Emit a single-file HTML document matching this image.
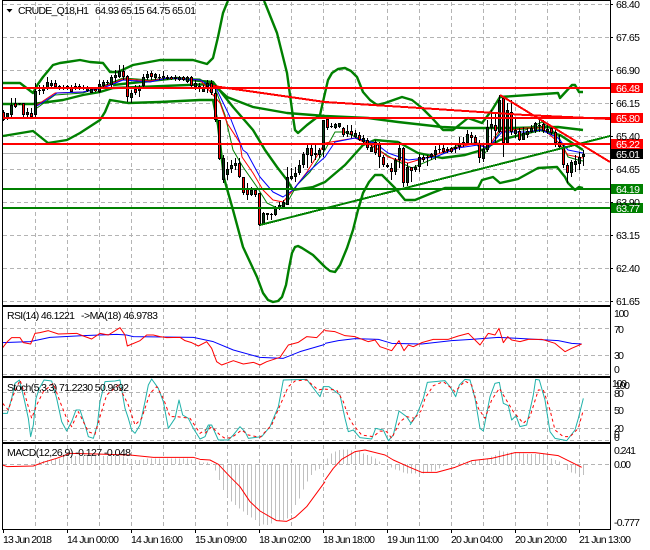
<!DOCTYPE html>
<html><head><meta charset="utf-8"><style>
html,body{margin:0;padding:0;background:#fff}
svg{display:block}
text{font-family:"Liberation Sans",sans-serif;font-size:10.5px;fill:#000}
polyline,path{fill:none;vector-effect:non-scaling-stroke;stroke-linejoin:round}
.g{stroke:#b4b4b4;stroke-width:1;stroke-dasharray:4 3;shape-rendering:crispEdges}
</style></head><body>
<svg width="650" height="550" viewBox="0 0 650 550" xmlns="http://www.w3.org/2000/svg">
<rect width="650" height="550" fill="#fff"/>
<!-- vertical grid -->
<path class="g" d="M35.5 2V304M67.5 2V304M99.5 2V304M131.5 2V304M163.5 2V304M195.5 2V304M227.5 2V304M259.5 2V304M291.5 2V304M323.5 2V304M355.5 2V304M387.5 2V304M419.5 2V304M451.5 2V304M483.5 2V304M515.5 2V304M547.5 2V304M579.5 2V304
M35.5 308V375M67.5 308V375M99.5 308V375M131.5 308V375M163.5 308V375M195.5 308V375M227.5 308V375M259.5 308V375M291.5 308V375M323.5 308V375M355.5 308V375M387.5 308V375M419.5 308V375M451.5 308V375M483.5 308V375M515.5 308V375M547.5 308V375M579.5 308V375
M35.5 379V441M67.5 379V441M99.5 379V441M131.5 379V441M163.5 379V441M195.5 379V441M227.5 379V441M259.5 379V441M291.5 379V441M323.5 379V441M355.5 379V441M387.5 379V441M419.5 379V441M451.5 379V441M483.5 379V441M515.5 379V441M547.5 379V441M579.5 379V441
M35.5 445V528M67.5 445V528M99.5 445V528M131.5 445V528M163.5 445V528M195.5 445V528M227.5 445V528M259.5 445V528M291.5 445V528M323.5 445V528M355.5 445V528M387.5 445V528M419.5 445V528M451.5 445V528M483.5 445V528M515.5 445V528M547.5 445V528M579.5 445V528"/>
<!-- horizontal grid -->
<path class="g" d="M3 4.5H610M3 37.5H610M3 70.5H610M3 103.5H610M3 136.5H610M3 169.5H610M3 202.5H610M3 235.5H610M3 268.5H610M3 301.5H610
M3 328.5H610M3 355.5H610M3 374.5H610
M3 392.5H610M3 410.5H610M3 428.5H610M3 440.5H610
M3 464.5H610"/>
<path d="M3 153.5H610" stroke="#b4b4b4" stroke-width="1" shape-rendering="crispEdges"/>

<!-- Bollinger bands -->
<g>
<polyline stroke="#008000" stroke-width="2.4" points="3,83 20,83 33,93 38,84 43,77 53,65 60,63 67,62 80,60 90,62 103,63 110,72 118,72 133,65 160,60 193,60 207,64 213,58 218,37 223,13 227,3 228,1"/>
<polyline stroke="#008000" stroke-width="2.4" points="264,1 265,3 277,33 287,73 293,117 295,130 298,133 307,125 320,115 325,93 328,80 332,73 338,69 345,68 351,71 357,77 363,92 370,100 377,105 385,103 402,97 412,100 422,108 432,118 443,130 453,130 468,118 482,123 492,110 500,97 558,93 560,98 572,85 575,85 579,92 583,92"/>
<polyline stroke="#008000" stroke-width="2.4" points="3,136 33,131 48,143 67,140 80,133 100,120 105,112 110,100 128,103 160,102 200,100 213,100 218,125 224,178 233,210 243,247 257,277 263,293 268,300 273,302 278,301 282,297 286,285 289,268 292,253 295,247 298,246 302,248 313,255 325,267 330,271 335,272 340,265 347,248 353,230 358,210 363,193 369,182 375,175 382,175 395,188 405,200 415,200 432,193 445,188 478,188 482,180 493,177 500,183 518,179 538,168 557,167 565,177 568,183 575,190 579,187 583,188"/>
<polyline stroke="#008000" stroke-width="2.4" points="3,104 33,104 63,100 83,95 100,92 113,88 213,84 227,97 253,107 287,113 325,116 368,118 398,122 442,127 465,128 512,128 558,127 583,130"/>
<polyline stroke="#008000" stroke-width="2.4" points="113,85 150,81 177,78 200,81 213,82 233,107 253,130 265,150 277,167 287,180 293,190 313,187 325,182 345,165 363,145 375,140 398,142 418,153 442,158 465,155 482,150 500,140 540,130 560,135 583,150"/>
</g>
<!-- MAs -->
<polyline stroke="#008000" stroke-width="1" points="37,108 55,95 83,93 103,86 123,78 150,80 167,78 200,79 215,88 225,115 233,150 243,167 257,187 267,203 277,208 287,203 297,185 310,172 325,150 335,132 345,132 362,140 382,152 395,160 412,168 435,158 458,145 475,143 485,153 495,140 502,128 525,130 542,122 558,135 568,157 578,160 583,161"/>
<polyline stroke="#f00" stroke-width="1" points="37,105 55,93 83,92 103,87 123,79 150,81 167,78 200,80 220,103 227,123 240,143 242,157 253,173 263,190 273,200 283,202 293,190 307,172 325,143 355,138 375,147 388,157 408,163 435,155 458,147 478,143 488,148 498,132 525,128 542,128 558,142 568,155 583,158"/>
<polyline stroke="#00f" stroke-width="1" points="37,106 57,93 83,92 103,88 123,80 150,82 167,78 200,80 217,90 230,117 243,150 247,153 260,177 273,192 283,197 293,190 307,173 325,157 335,142 355,138 375,143 388,153 408,160 435,157 458,148 478,145 488,148 502,132 525,132 542,130 558,138 568,150 583,153"/>

<!-- wicks -->
<path stroke="#000" stroke-width="1" shape-rendering="crispEdges" d="M3.5 110V121M7.5 113V120M11.5 98V117M15.5 98V108M19.5 103V105M23.5 103V119M27.5 108V118M31.5 108V118M35.5 83V117M39.5 85V95M43.5 85V94M47.5 77V90M51.5 80V87M55.5 80V88M59.5 85V90M63.5 85V90M67.5 85V90M71.5 85V92M75.5 83V90M79.5 84V90M83.5 85V90M87.5 86V92M91.5 87V93M95.5 87V92M99.5 80V93M103.5 80V87M107.5 80V85M111.5 75V87M115.5 70V82M119.5 65V78M123.5 65V80M127.5 75V102M131.5 90V103M135.5 85V95M139.5 85V97M143.5 74V87M147.5 71V80M151.5 71V80M155.5 73V80M159.5 74V80M163.5 71V80M167.5 75V80M171.5 76V80M175.5 75V81M179.5 76V81M183.5 76V81M187.5 76V83M191.5 76V87M195.5 80V90M199.5 83V92M203.5 85V92M207.5 80V93M211.5 80V95M215.5 85V122M219.5 120V160M223.5 155V183M227.5 162V180M231.5 160V173M235.5 158V170M239.5 158V178M243.5 177V195M247.5 183V200M251.5 187V196M255.5 188V197M259.5 193V226M263.5 212V225M267.5 213V220M271.5 213V220M275.5 206V216M279.5 202V210M283.5 200V208M287.5 167V205M291.5 168V180M295.5 167V182M299.5 160V175M303.5 152V168M307.5 143V168M311.5 143V163M315.5 143V160M319.5 148V158M323.5 120V157M327.5 118V130M331.5 123V128M335.5 123V129M339.5 123V128M343.5 127V137M347.5 125V137M351.5 125V138M355.5 130V138M359.5 132V141M363.5 135V143M367.5 138V150M371.5 143V152M375.5 140V155M379.5 142V168M383.5 155V167M387.5 163V168M391.5 163V180M395.5 158V175M399.5 142V168M403.5 147V187M407.5 163V186M411.5 167V182M415.5 165V172M419.5 154V172M423.5 155V162M427.5 155V166M431.5 153V160M435.5 146V160M439.5 145V153M443.5 145V153M447.5 147V153M451.5 147V153M455.5 145V153M459.5 137V150M463.5 137V147M467.5 130V143M471.5 132V143M475.5 135V145M479.5 140V163M483.5 145V162M487.5 120V152M491.5 110V143M495.5 112V143M499.5 95V133M503.5 97V157M507.5 103V145M511.5 100V135M515.5 118V138M519.5 128V141M523.5 127V140M527.5 128V138M531.5 125V133M535.5 122V133M539.5 120V132M543.5 120V133M547.5 125V134M551.5 127V135M555.5 130V147M559.5 135V149M563.5 145V168M567.5 163V183M571.5 160V177M575.5 155V172M579.5 152V170M583.5 150V166"/>
<!-- bear bodies -->
<path stroke="#000" stroke-width="3" shape-rendering="crispEdges" d="M3.5 112V120M15.5 103V107M23.5 103V115M31.5 113V117M55.5 83V87M59.5 86V89M71.5 87V92M79.5 86V88M95.5 89V91M123.5 71V77M127.5 76V97M135.5 89V93M151.5 73V77M171.5 77V79M183.5 77V80M191.5 77V86M199.5 86V89M211.5 83V93M215.5 93V120M219.5 120V159M239.5 163V177M243.5 177V193M247.5 189V195M255.5 190V195M259.5 193V225M311.5 148V156M327.5 119V128M343.5 128V135M351.5 131V135M359.5 135V140M367.5 140V148M375.5 142V153M379.5 143V157M383.5 157V165M391.5 168V172M403.5 148V183M411.5 167V171M423.5 157V160M443.5 148V152M451.5 148V152M471.5 135V138M475.5 137V143M479.5 143V158M495.5 125V131M503.5 98V143M511.5 112V132M519.5 131V140M543.5 124V131M551.5 128V133M555.5 132V143M559.5 142V147M563.5 147V165M567.5 165V173"/>
<path stroke="#f00" stroke-width="1" shape-rendering="crispEdges" d="M3.5 113V119M15.5 104V106M23.5 104V114M31.5 114V116M55.5 84V86M59.5 87V88M71.5 88V91M79.5 87V88M95.5 90V91M123.5 72V76M127.5 77V96M135.5 90V92M151.5 74V76M171.5 78V79M183.5 78V79M191.5 78V85M199.5 87V88M211.5 84V92M215.5 94V119M219.5 121V158M239.5 164V176M243.5 178V192M247.5 190V194M255.5 191V194M259.5 194V224M311.5 149V155M327.5 120V127M343.5 129V134M351.5 132V134M359.5 136V139M367.5 141V147M375.5 143V152M379.5 144V156M383.5 158V164M391.5 169V171M403.5 149V182M411.5 168V170M423.5 158V159M443.5 149V151M451.5 149V151M471.5 136V137M475.5 138V142M479.5 144V157M495.5 126V130M503.5 99V142M511.5 113V131M519.5 132V139M543.5 125V130M551.5 129V132M555.5 133V142M559.5 143V146M563.5 148V164M567.5 166V172"/>
<!-- bull bodies -->
<path stroke="#000" stroke-width="3" shape-rendering="crispEdges" d="M7.5 113V119M11.5 105V115M19.5 103V104M27.5 112V115M35.5 91V115M39.5 90V91M43.5 88V91M47.5 82V89M51.5 83V86M63.5 87V89M67.5 86V87M75.5 86V88M83.5 87V89M87.5 88V91M91.5 89V93M99.5 84V92M103.5 82V86M107.5 82V83M111.5 77V85M115.5 75V78M119.5 71V77M131.5 93V98M139.5 88V91M143.5 77V86M147.5 74V78M155.5 74V78M159.5 77V78M163.5 76V78M167.5 77V79M175.5 77V79M179.5 77V80M187.5 77V82M195.5 83V87M203.5 87V92M207.5 83V87M223.5 158V180M227.5 169V175M231.5 165V169M235.5 163V166M251.5 190V195M263.5 213V224M267.5 213V215M271.5 214V215M275.5 207V215M279.5 205V208M283.5 202V207M287.5 177V205M291.5 176V179M295.5 173V177M299.5 165V173M303.5 154V165M307.5 148V155M315.5 153V155M319.5 150V155M323.5 120V150M331.5 126V127M335.5 124V128M339.5 123V127M347.5 131V134M355.5 133V137M363.5 138V142M371.5 147V152M387.5 165V167M395.5 160V172M399.5 148V160M407.5 167V183M415.5 167V170M419.5 157V167M427.5 157V158M431.5 154V157M435.5 150V155M439.5 149V150M447.5 149V151M455.5 147V149M459.5 143V147M463.5 142V145M467.5 134V143M483.5 149V159M487.5 127V150M491.5 124V128M499.5 100V132M507.5 110V143M515.5 130V134M523.5 133V140M527.5 131V135M531.5 128V132M535.5 123V131M539.5 125V126M547.5 129V132M571.5 162V173M575.5 161V165M579.5 157V164M583.5 154V157"/>
<path stroke="#063f15" stroke-width="1" shape-rendering="crispEdges" d="M7.5 114V118M11.5 106V114M27.5 113V114M35.5 92V114M43.5 89V90M47.5 83V88M51.5 84V85M63.5 88V89M87.5 89V90M91.5 90V92M99.5 85V91M103.5 83V85M111.5 78V84M115.5 76V77M119.5 72V76M131.5 94V97M139.5 89V90M143.5 78V85M147.5 75V77M155.5 75V77M163.5 77V78M179.5 78V79M187.5 78V81M195.5 84V86M203.5 88V91M207.5 84V86M223.5 159V179M227.5 170V174M231.5 166V168M235.5 164V165M251.5 191V194M263.5 214V223M275.5 208V214M279.5 206V207M283.5 203V206M287.5 178V204M291.5 177V178M295.5 174V176M299.5 166V172M303.5 155V164M307.5 149V154M319.5 151V154M323.5 121V149M335.5 125V127M339.5 124V126M347.5 132V133M355.5 134V136M363.5 139V141M371.5 148V151M395.5 161V171M399.5 149V159M407.5 168V182M415.5 168V169M419.5 158V166M431.5 155V156M435.5 151V154M459.5 144V146M463.5 143V144M467.5 135V142M483.5 150V158M487.5 128V149M491.5 125V127M499.5 101V131M507.5 111V142M515.5 131V133M523.5 134V139M527.5 132V134M531.5 129V131M535.5 124V130M547.5 130V131M571.5 163V172M575.5 162V164M579.5 158V163M583.5 155V156"/>

<!-- objects -->
<g stroke-width="2" shape-rendering="crispEdges">
<path stroke="#008000" d="M3 189H611M3 208H611"/>
<polyline stroke="#008000" points="260,225 610,136"/>
<polyline stroke="#f00" points="500,95 610,162"/>
<polyline stroke="#f00" points="213,86 290,97 325,102 420,108 525,115 610,119"/>
<path stroke="#f00" d="M3 88H611M3 118H611M3 144H611"/>
</g>

<!-- RSI -->
<g transform="translate(0,300) scale(.33333)" stroke-width="1">
<polyline stroke="#00f" points="8,128 90,125 150,112 250,107 350,103 380,105 400,110 580,112 640,125 700,150 780,172 850,175 900,155 975,133"/>
<polyline stroke="#f00" points="8,143 22,125 35,113 60,113 70,128 92,132 105,100 120,98 145,92 175,102 230,100 250,108 275,117 300,100 325,105 360,83 375,105 382,138 420,122 440,105 460,105 480,110 500,113 540,112 555,122 575,128 595,138 620,125 635,145 650,185 665,195 700,182 730,192 760,187 780,195 800,185 840,172 865,135 895,127 920,110 950,113 975,88"/>
</g>
<g transform="translate(325,300) scale(.33333)" stroke-width="1">
<polyline stroke="#00f" points="0,130 40,122 90,116 160,118 200,130 290,132 380,122 440,118 520,112 580,115 700,122 740,130 770,132"/>
<polyline stroke="#f00" points="0,92 30,95 60,107 90,110 130,125 150,120 165,140 200,152 222,122 237,152 250,135 265,140 290,128 325,118 370,118 400,108 430,100 465,135 490,100 510,105 522,85 535,128 548,110 560,120 585,125 610,118 650,118 690,130 720,155 740,145 770,132"/>
</g>

<!-- Stoch -->
<g stroke-width="1">
<g transform="translate(0,375) scale(.33333)">
<polyline stroke="#20b2aa" points="8,115 22,115 35,70 45,25 58,15 72,70 85,130 92,185 100,150 108,70 118,40 132,15 155,18 170,70 185,140 200,168 215,140 228,105 240,105 255,150 265,185 280,190 292,150 300,80 315,20 345,18 360,15 375,100 385,130 395,165 405,175 420,150 435,80 445,30 455,12 475,40 490,80 505,160 525,130 537,75 548,120 565,130 580,160 600,192 615,185 630,150"/>
<polyline stroke="#f00" stroke-dasharray="3 3" points="8,85 25,105 40,60 60,15 75,60 95,130 110,90 130,50 160,25 180,80 200,130 215,155 235,110 265,170 285,178 300,125 320,60 355,30 385,90 405,150 425,130 450,55 470,35 490,70 510,125 530,125 570,130 600,175 630,155"/>
</g>
<g transform="translate(205,375) scale(.33333)">
<polyline stroke="#20b2aa" points="0,170 10,150 20,150 40,195 70,195 85,180 105,155 120,170 130,190 170,185 195,155 220,95 235,15 305,13 345,65 355,35 372,35 405,60 420,130 430,170 445,165 465,188 500,192 512,160 535,165 550,197 565,180 582,108 605,125 618,145 630,128"/>
<polyline stroke="#f00" stroke-dasharray="3 3" points="0,175 20,155 45,180 60,190 80,188 110,165 130,180 165,187 200,150 230,80 250,35 270,18 305,15 340,45 355,42 395,45 415,80 430,125 445,150 470,180 505,185 525,168 545,170 560,190 585,140 605,125 630,130"/>
</g>
<g transform="translate(410,375) scale(.33333)">
<polyline stroke="#20b2aa" points="0,150 20,120 40,70 52,22 105,17 120,35 137,65 148,30 165,13 180,15 195,70 205,130 210,160 220,168 240,65 255,25 268,22 280,85 295,92 305,135 318,122 330,155 350,150 370,60 377,13 388,15 405,75 420,170 435,190 470,197 495,165 505,130 520,70"/>
<polyline stroke="#f00" stroke-dasharray="3 3" points="5,140 35,105 45,70 70,32 100,20 125,40 135,50 165,18 185,30 205,100 225,130 245,75 268,40 295,85 310,110 340,145 360,125 385,45 400,45 420,105 435,165 460,185 480,185 505,160 520,105"/>
</g>
</g>

<!-- MACD histogram -->
<g transform="translate(0,430) scale(1,.33333)">
<path stroke="#c0c0c0" stroke-width="1" shape-rendering="crispEdges" d="M35.5 102V100M39.5 102V95M43.5 102V93M47.5 102V90M51.5 102V88M55.5 102V85M59.5 102V85M63.5 102V82M67.5 102V80M71.5 102V78M75.5 102V78M79.5 102V78M83.5 102V78M87.5 102V78M91.5 102V78M95.5 102V78M99.5 102V78M103.5 102V78M107.5 102V78M111.5 102V78M115.5 102V78M119.5 102V78M123.5 102V80M127.5 102V85M131.5 102V88M135.5 102V90M139.5 102V90M143.5 102V88M147.5 102V85M151.5 102V85M155.5 102V85M159.5 102V85M163.5 102V85M167.5 102V85M171.5 102V85M175.5 102V85M179.5 102V85M183.5 102V85M187.5 102V85M191.5 102V88M195.5 102V92M199.5 102V95M203.5 102V97M207.5 102V98M211.5 102V100
M215.5 102V122M219.5 102V150M223.5 102V180M227.5 102V200M231.5 102V215M235.5 102V225M239.5 102V235M243.5 102V245M247.5 102V255M251.5 102V262M255.5 102V270M259.5 102V280M263.5 102V283M267.5 102V285M271.5 102V280M275.5 102V272M279.5 102V272M283.5 102V270M287.5 102V265M291.5 102V250M295.5 102V225M299.5 102V205M303.5 102V178M307.5 102V155M311.5 102V135M315.5 102V122M319.5 102V117M323.5 102V108
M327.5 102V85M331.5 102V70M335.5 102V65M339.5 102V60M343.5 102V58M347.5 102V58M351.5 102V62M355.5 102V65M359.5 102V65M363.5 102V70M367.5 102V75M371.5 102V80M375.5 102V85M379.5 102V95
M387.5 102V105M391.5 102V112M395.5 102V118M399.5 102V122M403.5 102V127M407.5 102V130M411.5 102V130M415.5 102V130M419.5 102V130M423.5 102V130M427.5 102V128M431.5 102V125M435.5 102V122M439.5 102V115M443.5 102V108
M451.5 102V105M455.5 102V100M459.5 102V97M463.5 102V97M467.5 102V95M471.5 102V92M475.5 102V90M479.5 102V90M483.5 102V85M487.5 102V85M491.5 102V80M495.5 102V75M499.5 102V62M503.5 102V65M507.5 102V68M511.5 102V68M515.5 102V68M519.5 102V68M523.5 102V70M527.5 102V72M531.5 102V72M535.5 102V72M539.5 102V72M543.5 102V72M547.5 102V78M551.5 102V85M555.5 102V90M559.5 102V95
M563.5 102V105M567.5 102V120M571.5 102V127M575.5 102V130M579.5 102V132M583.5 102V135"/>
</g>
<g transform="translate(0,430) scale(.33333)">
<polyline stroke="#f00" stroke-width="1" points="8,105 22,110 100,108 130,97 170,85 210,70 290,72 390,75 460,82 580,82 600,88 630,90 655,103 690,140 720,170 750,215 780,243 830,272 860,274 885,262 920,230 975,155"/>
</g>
<g transform="translate(325,430) scale(.33333)">
<polyline stroke="#f00" stroke-width="1" points="0,150 25,115 50,88 90,65 120,60 180,75 205,90 250,110 290,127 335,127 390,112 440,92 500,85 570,68 630,68 700,77 770,112"/>
</g>

<!-- frames -->
<path stroke="#000" stroke-width="1" shape-rendering="crispEdges" d="M2.5 0V529M610.5 0V529M2 0.5H611M2 305.5H611M2 306.5H611M2 376.5H611M2 377.5H611M2 442.5H611M2 443.5H611M2 529.5H611
M3.5 530V533M67.5 530V533M131.5 530V533M195.5 530V533M259.5 530V533M323.5 530V533M387.5 530V533M451.5 530V533M515.5 530V533M579.5 530V533
M611 4.5H613M611 37.5H613M611 70.5H613M611 103.5H613M611 136.5H613M611 169.5H613M611 202.5H613M611 235.5H613M611 268.5H613M611 301.5H613"/>

<!-- price tags -->
<rect x="611" y="83" width="32" height="10" fill="#f00"/>
<rect x="611" y="113" width="32" height="10" fill="#f00"/>
<rect x="611" y="139" width="32" height="10" fill="#f00"/>
<rect x="611" y="149" width="32" height="10" fill="#000"/>
<rect x="611" y="184" width="32" height="10" fill="#008000"/>
<rect x="611" y="203" width="32" height="10" fill="#008000"/>

<!-- header triangle -->
<path d="M6.5 9H12.5L9.5 12.5Z" fill="#000" stroke="none" style="fill:#000"/>

<!-- labels -->
<g>
<text x="18" y="14" textLength="71">CRUDE_Q18,H1</text>
<text x="95" y="14" textLength="101">64.93 65.15 64.75 65.01</text>
<text x="7" y="319" textLength="68">RSI(14) 46.1221</text>
<text x="81" y="319" textLength="77">-&gt;MA(18) 46.9783</text>
<text x="7" y="391" textLength="122">Stoch(5,3,3) 71.2230 50.9692</text>
<text x="7" y="456" textLength="124">MACD(12,26,9) -0.127 -0.048</text>

<text x="616" y="8" textLength="24">68.40</text>
<text x="616" y="41" textLength="24">67.65</text>
<text x="616" y="74" textLength="24">66.90</text>
<text x="616" y="107" textLength="24">66.15</text>
<text x="616" y="140" textLength="24">65.40</text>
<text x="616" y="173" textLength="24">64.65</text>
<text x="616" y="206" textLength="24">63.90</text>
<text x="616" y="239" textLength="24">63.15</text>
<text x="616" y="272" textLength="24">62.40</text>
<text x="616" y="305" textLength="24">61.65</text>

<text x="616" y="92" textLength="24" style="fill:#fff">66.48</text>
<text x="616" y="122" textLength="24" style="fill:#fff">65.80</text>
<text x="616" y="148" textLength="24" style="fill:#fff">65.22</text>
<text x="616" y="158" textLength="24" style="fill:#fff">65.01</text>
<text x="616" y="193" textLength="24" style="fill:#fff">64.19</text>
<text x="616" y="212" textLength="24" style="fill:#fff">63.77</text>

<text x="614" y="317" textLength="15">100</text>
<text x="614" y="333" textLength="10">70</text>
<text x="614" y="359" textLength="10">30</text>
<text x="614" y="373">0</text>

<text x="612" y="387" textLength="15">100</text>
<text x="615" y="389" textLength="15">100</text>
<text x="614" y="397" textLength="10">80</text>
<text x="614" y="414" textLength="10">50</text>
<text x="614" y="432" textLength="10">20</text>
<text x="614" y="438">0</text>
<text x="614" y="441">0</text>

<text x="614" y="454" textLength="22">0.241</text>
<text x="614" y="468" textLength="17">0.00</text>
<text x="614" y="526" textLength="26">-0.777</text>

<text x="3" y="543" textLength="49">13 Jun 2018</text>
<text x="67" y="543" textLength="52">14 Jun 00:00</text>
<text x="131" y="543" textLength="52">14 Jun 16:00</text>
<text x="195" y="543" textLength="52">15 Jun 09:00</text>
<text x="259" y="543" textLength="52">18 Jun 02:00</text>
<text x="323" y="543" textLength="52">18 Jun 18:00</text>
<text x="387" y="543" textLength="52">19 Jun 11:00</text>
<text x="451" y="543" textLength="52">20 Jun 04:00</text>
<text x="515" y="543" textLength="52">20 Jun 20:00</text>
<text x="579" y="543" textLength="52">21 Jun 13:00</text>
</g>
</svg>
</body></html>
